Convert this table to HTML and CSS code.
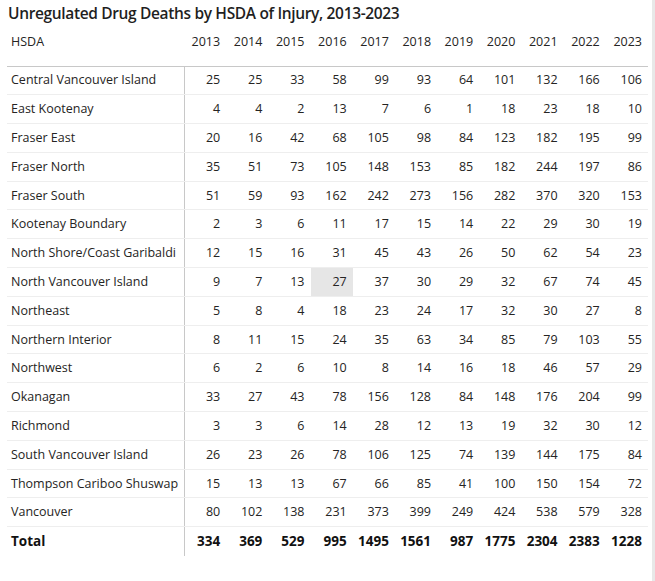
FILE: index.html
```html
<!DOCTYPE html>
<html>
<head>
<meta charset="utf-8">
<link rel="stylesheet" href="styles.css">
</head>
<body>
<div class="page">
  <h1 class="title">Unregulated Drug Deaths by HSDA of Injury, 2013-2023</h1>
  <table class="matrix">
    <colgroup>
      <col class="c-name">
      <col span="11" class="c-year">
    </colgroup>
    <thead>
      <tr>
        <th class="name">HSDA</th>
        <th>2013</th><th>2014</th><th>2015</th><th>2016</th><th>2017</th><th>2018</th><th>2019</th><th>2020</th><th>2021</th><th>2022</th><th>2023</th>
      </tr>
    </thead>
    <tbody>
      <tr><td class="name">Central Vancouver Island</td><td>25</td><td>25</td><td>33</td><td>58</td><td>99</td><td>93</td><td>64</td><td>101</td><td>132</td><td>166</td><td>106</td></tr>
      <tr><td class="name">East Kootenay</td><td>4</td><td>4</td><td>2</td><td>13</td><td>7</td><td>6</td><td>1</td><td>18</td><td>23</td><td>18</td><td>10</td></tr>
      <tr><td class="name">Fraser East</td><td>20</td><td>16</td><td>42</td><td>68</td><td>105</td><td>98</td><td>84</td><td>123</td><td>182</td><td>195</td><td>99</td></tr>
      <tr><td class="name">Fraser North</td><td>35</td><td>51</td><td>73</td><td>105</td><td>148</td><td>153</td><td>85</td><td>182</td><td>244</td><td>197</td><td>86</td></tr>
      <tr><td class="name">Fraser South</td><td>51</td><td>59</td><td>93</td><td>162</td><td>242</td><td>273</td><td>156</td><td>282</td><td>370</td><td>320</td><td>153</td></tr>
      <tr><td class="name">Kootenay Boundary</td><td>2</td><td>3</td><td>6</td><td>11</td><td>17</td><td>15</td><td>14</td><td>22</td><td>29</td><td>30</td><td>19</td></tr>
      <tr><td class="name">North Shore/Coast Garibaldi</td><td>12</td><td>15</td><td>16</td><td>31</td><td>45</td><td>43</td><td>26</td><td>50</td><td>62</td><td>54</td><td>23</td></tr>
      <tr><td class="name">North Vancouver Island</td><td>9</td><td>7</td><td>13</td><td class="hover">27</td><td>37</td><td>30</td><td>29</td><td>32</td><td>67</td><td>74</td><td>45</td></tr>
      <tr><td class="name">Northeast</td><td>5</td><td>8</td><td>4</td><td>18</td><td>23</td><td>24</td><td>17</td><td>32</td><td>30</td><td>27</td><td>8</td></tr>
      <tr><td class="name">Northern Interior</td><td>8</td><td>11</td><td>15</td><td>24</td><td>35</td><td>63</td><td>34</td><td>85</td><td>79</td><td>103</td><td>55</td></tr>
      <tr><td class="name">Northwest</td><td>6</td><td>2</td><td>6</td><td>10</td><td>8</td><td>14</td><td>16</td><td>18</td><td>46</td><td>57</td><td>29</td></tr>
      <tr><td class="name">Okanagan</td><td>33</td><td>27</td><td>43</td><td>78</td><td>156</td><td>128</td><td>84</td><td>148</td><td>176</td><td>204</td><td>99</td></tr>
      <tr><td class="name">Richmond</td><td>3</td><td>3</td><td>6</td><td>14</td><td>28</td><td>12</td><td>13</td><td>19</td><td>32</td><td>30</td><td>12</td></tr>
      <tr><td class="name">South Vancouver Island</td><td>26</td><td>23</td><td>26</td><td>78</td><td>106</td><td>125</td><td>74</td><td>139</td><td>144</td><td>175</td><td>84</td></tr>
      <tr><td class="name">Thompson Cariboo Shuswap</td><td>15</td><td>13</td><td>13</td><td>67</td><td>66</td><td>85</td><td>41</td><td>100</td><td>150</td><td>154</td><td>72</td></tr>
      <tr><td class="name">Vancouver</td><td>80</td><td>102</td><td>138</td><td>231</td><td>373</td><td>399</td><td>249</td><td>424</td><td>538</td><td>579</td><td>328</td></tr>
    </tbody>
    <tfoot>
      <tr><td class="name">Total</td><td>334</td><td>369</td><td>529</td><td>995</td><td>1495</td><td>1561</td><td>987</td><td>1775</td><td>2304</td><td>2383</td><td>1228</td></tr>
    </tfoot>
  </table>
</div>
</body>
</html>
```

FILE: styles.css
```css
html, body {
  margin: 0;
  padding: 0;
  background: #ffffff;
}

body {
  font-family: "Open Sans", "Noto Sans", sans-serif;
  color: #252423;
  width: 655px;
  height: 581px;
  box-sizing: border-box;
  border-right: 3px solid #e8e8e8;
  overflow: hidden;
}

.page {
  padding: 0 7px;
}

.title {
  margin: 0;
  font-size: 15.5px;
  font-weight: 600;
  line-height: 26px;
  padding-left: 1px;
  color: #1f1f1f;
  letter-spacing: -0.35px;
}

.matrix {
  border-collapse: collapse;
  width: 641px;
  table-layout: fixed;
  font-size: 12.5px;
}

.matrix .c-name {
  width: 177px;
}

.matrix th,
.matrix td {
  padding: 0 6px 0 0;
  text-align: right;
  white-space: nowrap;
  font-weight: 400;
}

.matrix th.name,
.matrix td.name {
  text-align: left;
  padding-left: 4px;
  padding-right: 0;
  overflow: hidden;
}

.matrix td.name {
  border-right: 1px solid #c8c8c8;
}

.matrix thead th {
  height: 40px;
  box-sizing: border-box;
  padding-top: 6px;
  vertical-align: top;
  line-height: 20px;
  border-bottom: 1px solid #c8c8c8;
}

.matrix tbody td,
.matrix tfoot td {
  height: 28.8px;
  box-sizing: border-box;
  line-height: 20px;
  vertical-align: middle;
}

.matrix tbody td {
  border-bottom: 1px solid #eeeeee;
}

.matrix tfoot td {
  font-weight: 700;
  font-size: 13.5px;
  color: #111111;
}

.matrix td.hover {
  background: #e6e6e6;
}
```
